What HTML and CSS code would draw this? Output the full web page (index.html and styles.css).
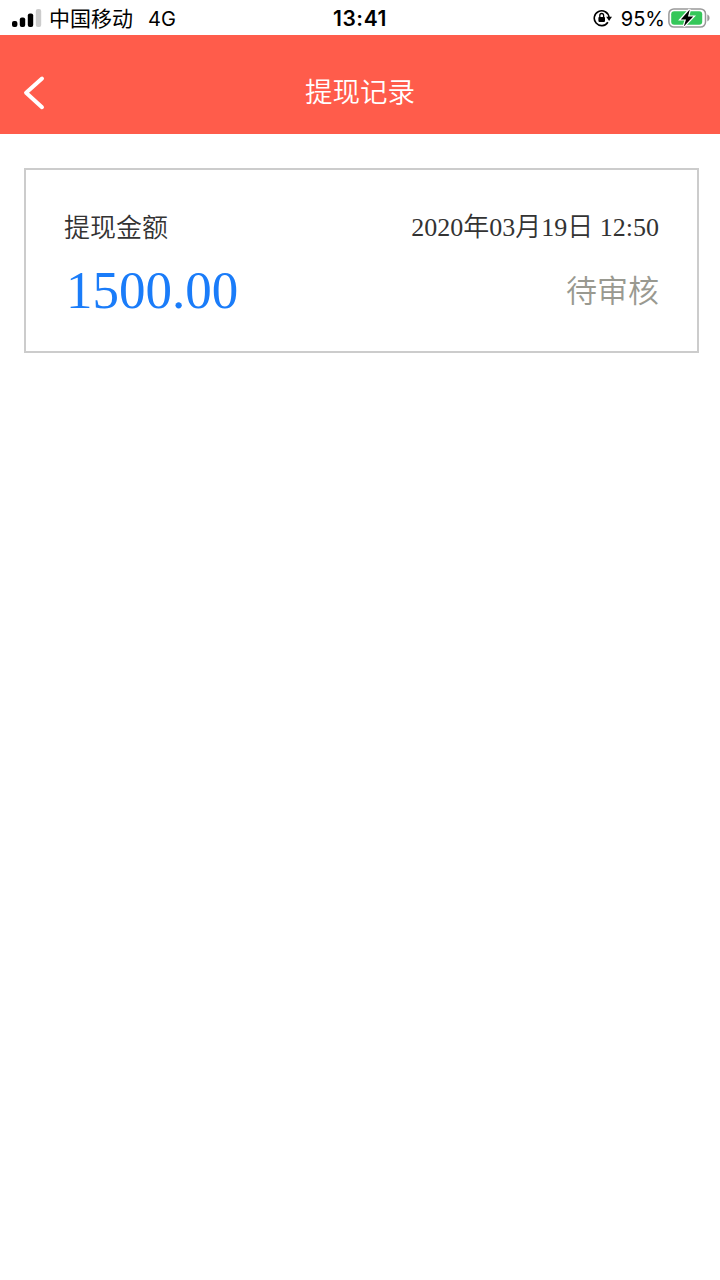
FILE: index.html
```html
<!DOCTYPE html>
<html lang="zh-CN">
  <head>
    <meta charset="UTF-8" />
    <meta name="viewport" content="width=device-width, initial-scale=1.0" />
    <title>提现记录</title>
    <link rel="stylesheet" href="styles.css">
  </head>
  <body>
    <div class="status-bar">
      <div class="status-left">
        <svg class="signal" width="30" height="20" viewBox="0 0 30 20">
          <rect x="0" y="13" width="5.4" height="6" rx="2" />
          <rect x="7.8" y="9.5" width="5.4" height="9.5" rx="2" />
          <rect x="15.8" y="5.5" width="5.4" height="13.5" rx="2" />
          <rect x="23.8" y="1" width="5.4" height="18" rx="2" fill="#ccc" />
        </svg>
        <span class="carrier">中国移动</span>
        <span class="network">4G</span>
      </div>
      <div class="time">13:41</div>
      <div class="status-right">
        <svg class="lock" width="20" height="18" viewBox="0 0 20 18">
          <path d="M14.9 13.2A7.4 7.4 0 1 1 16 8.2" fill="none" stroke="#000" stroke-width="1.6" />
          <path d="M13.2 7.8h5.8l-2.9 4.2z" />
          <rect x="5.4" y="7.9" width="6.6" height="5" rx="0.8" />
          <path d="M6.8 8.2V6.4a1.9 1.9 0 0 1 3.8 0v1.8" fill="none" stroke="#000" stroke-width="1.3" />
        </svg>
        <span class="percent">95%</span>
        <svg class="battery" width="43" height="22" viewBox="0 0 43 22">
          <rect x="0.9" y="0.9" width="36.6" height="18.2" rx="5" fill="#fff" stroke="#999" stroke-width="1.5" />
          <rect x="3.2" y="3.2" width="31" height="13.6" rx="3" fill="#35c759" />
          <path d="M39.3 6.6c3 1.2 3 5.6 0 6.8z" fill="#999" />
          <path d="M21.8 1.4L12.8 11.4h5.2L15.8 18.4 25.2 8.6h-5.2z" stroke="#fff" stroke-width="2.4" paint-order="stroke" />
        </svg>
      </div>
    </div>

    <div class="header">
      <svg class="back" width="24" height="38" viewBox="0 0 24 38">
        <path d="M20 4.5L4.1 18.8L20 33.2" fill="none" stroke="#fff" stroke-width="4" stroke-linecap="round" stroke-linejoin="round" />
      </svg>
      <h1>提现记录</h1>
    </div>

    <div class="record">
      <div class="row">
        <span class="label">提现金额</span>
        <span class="date">2020年03月19日 12:50</span>
      </div>
      <div class="row row-amount">
        <span class="amount">1500.00</span>
        <span class="state">待审核</span>
      </div>
    </div>
  </body>
</html>
```

FILE: styles.css
```css
* {
  margin: 0;
  padding: 0;
  box-sizing: border-box;
}

body {
  background-color: #fff;
  color: #333;
  font-family: "Liberation Serif", "Noto Sans CJK SC", serif;
}

svg {
  display: block;
}

.status-bar {
  display: grid;
  grid-template-columns: 1fr auto 1fr;
  align-items: center;
  height: 35px;
  padding: 2px 9px 0 12px;
  color: #000;
  font-family: Inter, "Noto Sans CJK SC", sans-serif;
  font-size: 21px;
  line-height: 32px;
}

.status-left,
.status-right {
  display: flex;
  align-items: center;
}

.status-right {
  justify-content: flex-end;
}

.signal {
  margin-top: -1px;
}

.carrier {
  margin-left: 7px;
}

.network {
  margin-left: 15px;
  font-size: 20px;
}

.time {
  margin-right: 3px;
  font-weight: 600;
  letter-spacing: 0.6px;
}

.lock {
  margin-top: -1px;
  margin-right: 8px;
}

.percent {
  font-size: 20px;
}

.battery {
  margin-left: 3px;
}

.header {
  display: grid;
  grid-template-columns: 60px 1fr 60px;
  align-items: center;
  height: 99px;
  padding-top: 17px;
  background-color: #ff5c4b;
  color: #fff;
}

.back {
  margin-left: 22px;
}

.header h1 {
  font-size: 27.5px;
  font-weight: 350;
  line-height: 40px;
  text-align: center;
}

.record {
  margin: 34px 21px 0 24px;
  padding: 38px 38px 0;
  height: 185px;
  border: 2px solid #ccc;
}

.row {
  display: flex;
  align-items: center;
  justify-content: space-between;
  height: 40px;
  font-size: 26px;
  font-weight: 350;
  line-height: 40px;
}

.label {
  padding-top: 1px;
}

.row-amount {
  height: 84px;
}

.amount {
  padding-left: 2px;
  color: #1a7cf9;
  font-size: 53px;
}

.state {
  padding-top: 4px;
  color: #999990;
  font-size: 31px;
}
```
